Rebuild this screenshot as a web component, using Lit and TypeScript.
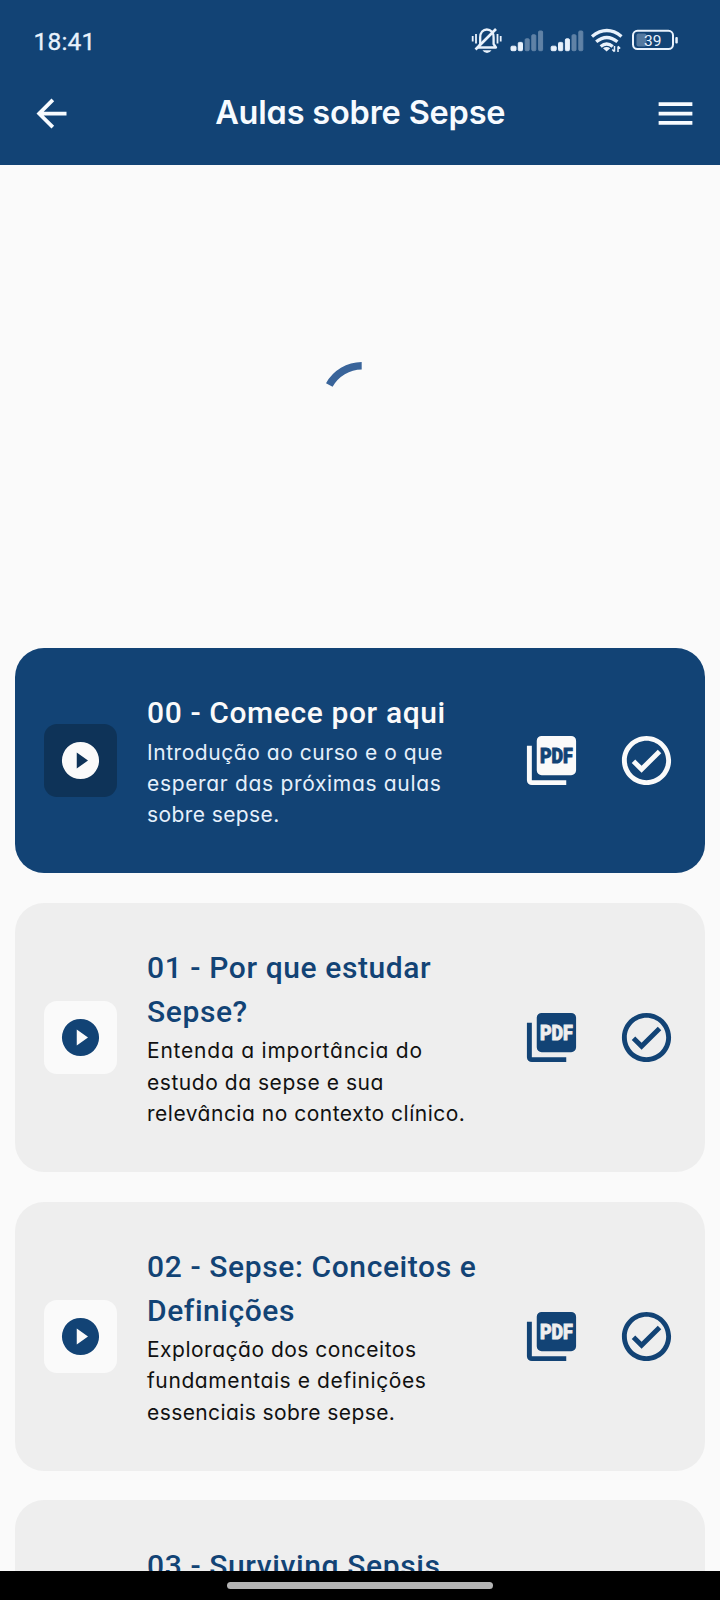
import { LitElement, html, css, svg } from "lit";
import { customElement, property } from "lit/decorators.js";
import { classMap } from "lit/directives/class-map.js";

interface Line {
  text: string;
  spacing: number;
}

interface Lesson {
  title: Line[];
  description: Line[];
  active?: boolean;
}

const lessons: Lesson[] = [
  {
    active: true,
    title: [{ text: "00 - Comece por aqui", spacing: 0.61 }],
    description: [
      { text: "Introdução ao curso e o que", spacing: 0.55 },
      { text: "esperar das próximas aulas", spacing: 0.67 },
      { text: "sobre sepse.", spacing: 0.4 },
    ],
  },
  {
    title: [
      { text: "01 - Por que estudar", spacing: 0.6 },
      { text: "Sepse?", spacing: 0.6 },
    ],
    description: [
      { text: "Entenda a importância do", spacing: 0.78 },
      { text: "estudo da sepse e sua", spacing: 0.54 },
      { text: "relevância no contexto clínico.", spacing: 0.5 },
    ],
  },
  {
    title: [
      { text: "02 - Sepse: Conceitos e", spacing: 0.61 },
      { text: "Definições", spacing: 0.55 },
    ],
    description: [
      { text: "Exploração dos conceitos", spacing: 0.5 },
      { text: "fundamentais e definições", spacing: 0.6 },
      { text: "essenciais sobre sepse.", spacing: 0.41 },
    ],
  },
  {
    title: [{ text: "03 - Surviving Sepsis", spacing: 0.61 }],
    description: [],
  },
];

@customElement("lesson-card")
export class LessonCard extends LitElement {
  @property({ attribute: false }) lesson!: Lesson;

  static styles = css`
    :host {
      display: block;
      flex: none;
    }
    .card {
      display: flex;
      align-items: center;
      box-sizing: border-box;
      min-height: 225px;
      padding: 43.1px 29px 42.6px;
      border-radius: 29px;
      background: #eeeeee;
      color: #124375;
    }
    .card.active {
      background: #124375;
      color: #fafafa;
    }
    .card.bare {
      align-items: flex-start;
      padding-top: 44px;
    }
    .bare .play {
      margin-top: 55px;
    }
    .play {
      display: flex;
      align-items: center;
      justify-content: center;
      flex: none;
      width: 73px;
      height: 73px;
      border-radius: 13px;
      background: #fafafa;
    }
    .active .play {
      background: #0e3358;
    }
    .play svg {
      width: 45px;
      height: 45px;
    }
    .text {
      flex: 1;
      min-width: 0;
      margin-left: 30px;
      white-space: nowrap;
    }
    .title {
      font: 500 30px/44px Roboto, sans-serif;
    }
    .description {
      padding-top: 1.4px;
      font: 400 21px/31.3px Inter, sans-serif;
      font-feature-settings: "cv11" 1;
      color: #111;
    }
    .active .description {
      color: #e6f0fb;
    }
    .line {
      display: block;
    }
    .actions {
      display: flex;
      gap: 36px;
      flex: none;
    }
    .actions svg {
      width: 59px;
      height: 59px;
      display: block;
    }
    .label {
      font: 900 8.6px Roboto, sans-serif;
      fill: #eeeeee;
      stroke: #eeeeee;
      stroke-width: 0.35px;
    }
    .active .label {
      fill: #124375;
      stroke: #124375;
    }
  `;

  private lines(items: Line[]) {
    return items.map(
      (l) => html`<span class="line" style="letter-spacing:${l.spacing}px">${l.text}</span>`
    );
  }

  render() {
    const l = this.lesson;
    return html`
      <div class=${classMap({ card: true, active: !!l.active, bare: !l.description.length })}>
        <div class="play">
          <svg viewBox="0 0 24 24" fill="currentColor">
            <path fill-rule="evenodd" d="M12 2.1a9.9 9.9 0 1 0 0 19.8 9.9 9.9 0 0 0 0-19.8zM10 16.3V7.7l6 4.3z" />
          </svg>
        </div>
        <div class="text">
          <div class="title">${this.lines(l.title)}</div>
          <div class="description">${this.lines(l.description)}</div>
        </div>
        ${l.description.length
          ? html`<div class="actions">
              <svg viewBox="0 0 24 24" fill="currentColor">
                <path d="M8 2h12a2 2 0 0 1 2 2v12a2 2 0 0 1-2 2H8a2 2 0 0 1-2-2V4a2 2 0 0 1 2-2zM2 6h2v14h14v2H4a2 2 0 0 1-2-2z" />
                <text class="label" x="7.3" y="12.9" textLength="13.4" lengthAdjust="spacingAndGlyphs">PDF</text>
              </svg>
              <svg viewBox="0 0 24 24" fill="currentColor">
                <path d="M12 2C6.48 2 2 6.48 2 12s4.48 10 10 10 10-4.48 10-10S17.52 2 12 2zm0 18c-4.41 0-8-3.59-8-8s3.59-8 8-8 8 3.59 8 8-3.59 8-8 8zm4.59-12.42L10 14.17l-2.59-2.58L6 13l4 4 8-8z" />
              </svg>
            </div>`
          : null}
      </div>
    `;
  }
}

const signal = (x: number, lit: number) =>
  [
    [0, 5, 46.2],
    [7.3, 4.2, 42.4],
    [14.2, 4, 38.8],
    [20.8, 4, 34.8],
    [27.6, 4, 31],
  ].map(
    ([dx, w, top], i) => svg`<rect x=${x + dx} y=${top} width=${w} height=${50.7 - top} rx="1"
      fill="#e9f2fc" opacity=${i < lit ? 1 : 0.36} />`
  );

@customElement("app-root")
export class AppRoot extends LitElement {
  static styles = css`
    :host {
      display: flex;
      flex-direction: column;
      width: 720px;
      height: 1600px;
      overflow: hidden;
      background: #fafafa;
    }
    .top {
      flex: none;
      height: 164.5px;
      background: #124375;
      color: #f7fbff;
    }
    .status {
      display: flex;
      justify-content: space-between;
      align-items: center;
      height: 82px;
      padding: 0 40px 0 33.5px;
    }
    .clock {
      padding-top: 2px;
      font: 400 24.5px/30px Roboto, sans-serif;
      letter-spacing: 0.2px;
      -webkit-text-stroke: 0.3px currentColor;
      color: #e9f2fc;
    }
    .system {
      width: 212px;
      height: 40px;
    }
    .percent {
      font: 400 15.5px Roboto, sans-serif;
    }
    .bar {
      display: flex;
      align-items: center;
      justify-content: space-between;
      height: 62px;
      padding: 0 21.5px 0 29px;
    }
    .bar svg {
      width: 45px;
      height: 45px;
    }
    .heading {
      margin: 0 7px 0 0;
      font: 600 32.5px/44px Inter, sans-serif;
      font-feature-settings: "cv11" 1;
      letter-spacing: -0.2px;
    }
    .player {
      display: flex;
      align-items: center;
      justify-content: center;
      flex: none;
      height: 477.5px;
    }
    .spinner {
      width: 84px;
      height: 84px;
    }
    .list {
      display: flex;
      flex-direction: column;
      gap: 29.8px;
      flex: 1;
      min-height: 0;
      overflow: hidden;
      padding: 6px 15px 0;
    }
    .nav {
      display: flex;
      justify-content: center;
      flex: none;
      height: 29.5px;
      background: #000;
    }
    .handle {
      width: 266px;
      height: 6.5px;
      margin-top: 11.5px;
      border-radius: 4px;
      background: #b4b4b4;
    }
  `;

  render() {
    return html`
      <header class="top">
        <div class="status">
          <span class="clock">18:41</span>
          <svg class="system" viewBox="468 21 212 40" fill="none" stroke="#e9f2fc">
            <g stroke-width="2.3">
              <path d="M478.500 47.500h17.500l-2.400-3.500v-6.500c0-5-3-8-6.700-8s-6.700 3-6.700 8v6.500z" stroke-linejoin="round" />
              <path d="M475.500 49.500L496 29" stroke-width="2.600" />
              <path d="M472.700 36v5.500M476 34v9.500M497.500 34v9.500M500.700 36v5.500" stroke-width="1.800" />
            </g>
            <path d="M482.500 50.300h9q-1.500 2.700-4.500 2.700t-4.500-2.700z" fill="#e9f2fc" stroke="none" />
            ${signal(511, 2)} ${signal(551.2, 3)}
            <g stroke-width="3.4">
              <path d="M592 36.500q15-11.800 29.500 0" />
              <path d="M596.200 41.800q10.600-8.600 21.200 0" />
              <path d="M600.700 46.500q6-4.800 12 0" />
            </g>
            <path d="M603 48.200q3.600-2.600 7.200 0l-3.600 3.400z" fill="#e9f2fc" stroke="none" />
            <path d="M614.500 46v5.500m-2.200-2l2.200 2.200M618 52v-5.500m2.200 2L618 46.300" stroke-width="1.500" />
            <rect x="636.500" y="33.500" width="10" height="13" rx="2" fill="#54799f" stroke="none" />
            <rect x="633" y="30.800" width="40" height="18.200" rx="4.500" stroke-width="2" />
            <rect x="675.300" y="37" width="2.500" height="6.500" rx="1" fill="#e9f2fc" stroke="none" />
            <text class="percent" x="644" y="46" textLength="17.500" fill="#e9f2fc" stroke="none">39</text>
          </svg>
        </div>
        <div class="bar">
          <svg viewBox="0 0 24 24" fill="currentColor">
            <path d="M20 11H7.830l5.590-5.590L12 4l-8 8 8 8 1.410-1.410L7.830 13H20z" />
          </svg>
          <h1 class="heading">Aulas sobre Sepse</h1>
          <svg viewBox="0 0 24 24" fill="currentColor">
            <path d="M3 18h18v-2H3zm0-5h18v-2H3zm0-7v2h18V6z" />
          </svg>
        </div>
      </header>
      <section class="player">
        <svg class="spinner" viewBox="0 0 84 84" fill="none">
          <path d="M43.700 4.800A37.300 37.300 0 0 0 11.300 24" stroke="#39649a" stroke-width="7.500" />
        </svg>
      </section>
      <main class="list">
        ${lessons.map((l) => html`<lesson-card .lesson=${l}></lesson-card>`)}
      </main>
      <footer class="nav"><div class="handle"></div></footer>
    `;
  }
}
